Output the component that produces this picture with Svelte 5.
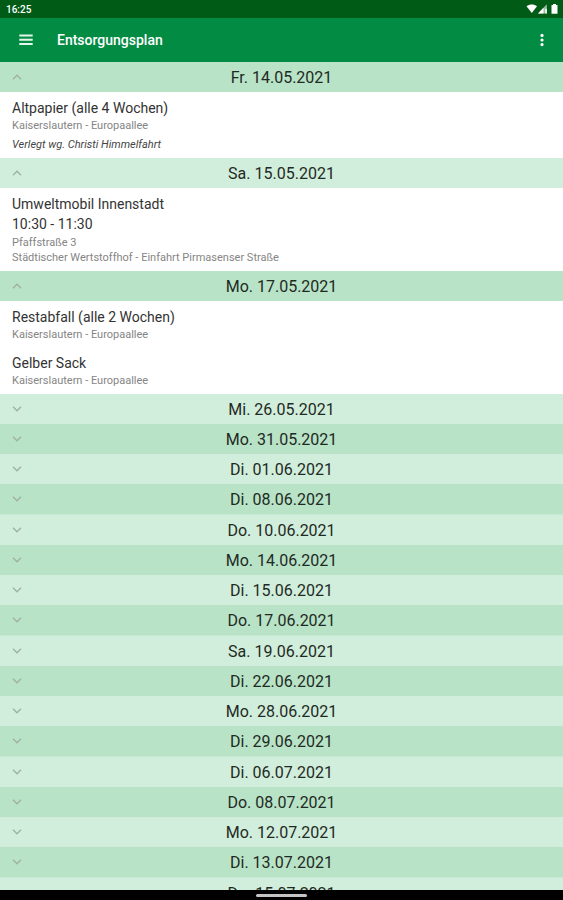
<script>
    let days = [
        {
            date: 'Fr. 14.05.2021',
            open: true,
            items: [
                { title: 'Altpapier (alle 4 Wochen)', places: ['Kaiserslautern - Europaallee'], note: 'Verlegt wg. Christi Himmelfahrt' }
            ]
        },
        {
            date: 'Sa. 15.05.2021',
            open: true,
            items: [
                {
                    title: 'Umweltmobil Innenstadt',
                    time: '10:30 - 11:30',
                    places: ['Pfaffstraße 3', 'Städtischer Wertstoffhof - Einfahrt Pirmasenser Straße']
                }
            ]
        },
        {
            date: 'Mo. 17.05.2021',
            open: true,
            items: [
                { title: 'Restabfall (alle 2 Wochen)', places: ['Kaiserslautern - Europaallee'] },
                { title: 'Gelber Sack', places: ['Kaiserslautern - Europaallee'] }
            ]
        },
        { date: 'Mi. 26.05.2021' },
        { date: 'Mo. 31.05.2021' },
        { date: 'Di. 01.06.2021' },
        { date: 'Di. 08.06.2021' },
        { date: 'Do. 10.06.2021' },
        { date: 'Mo. 14.06.2021' },
        { date: 'Di. 15.06.2021' },
        { date: 'Do. 17.06.2021' },
        { date: 'Sa. 19.06.2021' },
        { date: 'Di. 22.06.2021' },
        { date: 'Mo. 28.06.2021' },
        { date: 'Di. 29.06.2021' },
        { date: 'Di. 06.07.2021' },
        { date: 'Do. 08.07.2021' },
        { date: 'Mo. 12.07.2021' },
        { date: 'Di. 13.07.2021' },
        { date: 'Do. 15.07.2021' }
    ];

    function toggle(i) {
        days[i].open = !days[i].open;
    }
</script>

<div class="screen">
    <div class="status">
        <span>16:25</span>
        <svg width="34" height="12" viewBox="0 0 34 12" fill="#fff" aria-hidden="true">
            <path d="M0.5 3.2 C3.5 0.9 8 0.9 11 3.2 L5.8 10 Z" />
            <path d="M20.8 1.2 V10.5 H12 Z" fill-opacity="0.6" />
            <path d="M17.5 4.7 V10.5 H12 Z" />
            <path d="M19.3 5.8 H20.8 V10.5 H19.3 Z" />
            <path d="M27 1 H30 V2 H31.5 V10.7 H25.5 V2 H27 Z" />
        </svg>
    </div>

    <header class="toolbar">
        <button class="icon" aria-label="Menü">
            <svg width="14" height="12" viewBox="0 0 14 12" fill="none" stroke="#e6f5ec" stroke-width="2">
                <path d="M0.3 1.5 H13.7 M0.3 5.8 H13.7 M0.3 10.1 H13.7" />
            </svg>
        </button>
        <h1>Entsorgungsplan</h1>
        <button class="icon" aria-label="Weitere Optionen">
            <svg width="4" height="14" viewBox="0 0 4 14" fill="#fff">
                <circle cx="2" cy="2.4" r="1.6" />
                <circle cx="2" cy="7" r="1.6" />
                <circle cx="2" cy="11.6" r="1.6" />
            </svg>
        </button>
    </header>

    <main>
        {#each days as day, i}
            <section>
                <button class="day" aria-expanded={!!day.open} on:click={() => toggle(i)}>
                    <svg class:up={day.open} width="10" height="6" viewBox="0 0 10 6" fill="none" stroke="#9fb0a4" stroke-width="1.3">
                        <path d="M1 0.8 L5 4.8 L9 0.8" />
                    </svg>
                    <span>{day.date}</span>
                </button>
                {#if day.open && day.items}
                    <ul>
                        {#each day.items as item}
                            <li>
                                <p class="title">{item.title}</p>
                                {#if item.time}
                                    <p class="title time">{item.time}</p>
                                {/if}
                                {#each item.places as place}
                                    <p class="place">{place}</p>
                                {/each}
                                {#if item.note}
                                    <p class="note">{item.note}</p>
                                {/if}
                            </li>
                        {/each}
                    </ul>
                {/if}
            </section>
        {/each}
    </main>

    <div class="navbar"><div class="handle"></div></div>
</div>

<style>
    :global(body) {
        margin: 0;
        background: #fff;
    }
    .screen {
        display: flex;
        flex-direction: column;
        height: 100vh;
        font-family: Roboto, sans-serif;
    }
    .status {
        flex: none;
        display: flex;
        align-items: center;
        justify-content: space-between;
        height: 18px;
        padding: 0 3px 0 6px;
        background: #005b17;
        color: #fff;
        font-size: 10px;
        font-weight: 500;
    }
    .toolbar {
        flex: none;
        display: flex;
        align-items: center;
        height: 44px;
        padding: 0 6px;
        background: #028b43;
        color: #fff;
    }
    h1 {
        flex: 1;
        margin: 0 0 0 11px;
        font-size: 14px;
        font-weight: 500;
        line-height: 18px;
    }
    button {
        border: 0;
        padding: 0;
        background: none;
        font-family: inherit;
        cursor: pointer;
    }
    .icon {
        display: flex;
        align-items: center;
        justify-content: center;
        width: 40px;
        height: 40px;
    }
    .icon:last-child {
        width: 30px;
    }
    main {
        flex: 1;
        min-height: 0;
        overflow-y: auto;
        scrollbar-width: none;
    }
    .day {
        display: grid;
        grid-template-columns: 10px 1fr 10px;
        align-items: center;
        width: 100%;
        height: 30px;
        padding: 0 12px;
        background: #b8e3c7;
        color: #1f2a23;
        font-size: 16px;
        text-align: center;
    }
    section:nth-child(even) .day {
        background: #d1eedc;
    }
    /* thin divider after every fourth day further down the list */
    section:nth-child(4n + 7) {
        border-bottom: 1px solid #c5e9d2;
    }
    .up {
        transform: rotate(180deg);
    }
    ul {
        display: flex;
        flex-direction: column;
        gap: 11px;
        margin: 0;
        padding: 6px 12px;
        list-style: none;
        background: #fff;
    }
    p {
        margin: 0;
    }
    .title {
        color: #333;
        font-size: 14px;
        line-height: 20px;
    }
    .time {
        margin-bottom: 1px;
    }
    .place {
        color: #858585;
        font-size: 11px;
        line-height: 15px;
    }
    .note {
        margin-top: 4px;
        color: #444;
        font-size: 11px;
        font-style: italic;
        line-height: 15px;
    }
    .navbar {
        flex: none;
        display: flex;
        justify-content: center;
        align-items: center;
        height: 10px;
        background: #000;
    }
    .handle {
        width: 51px;
        height: 3px;
        border-radius: 2px;
        background: #c4c4c4;
    }
</style>
